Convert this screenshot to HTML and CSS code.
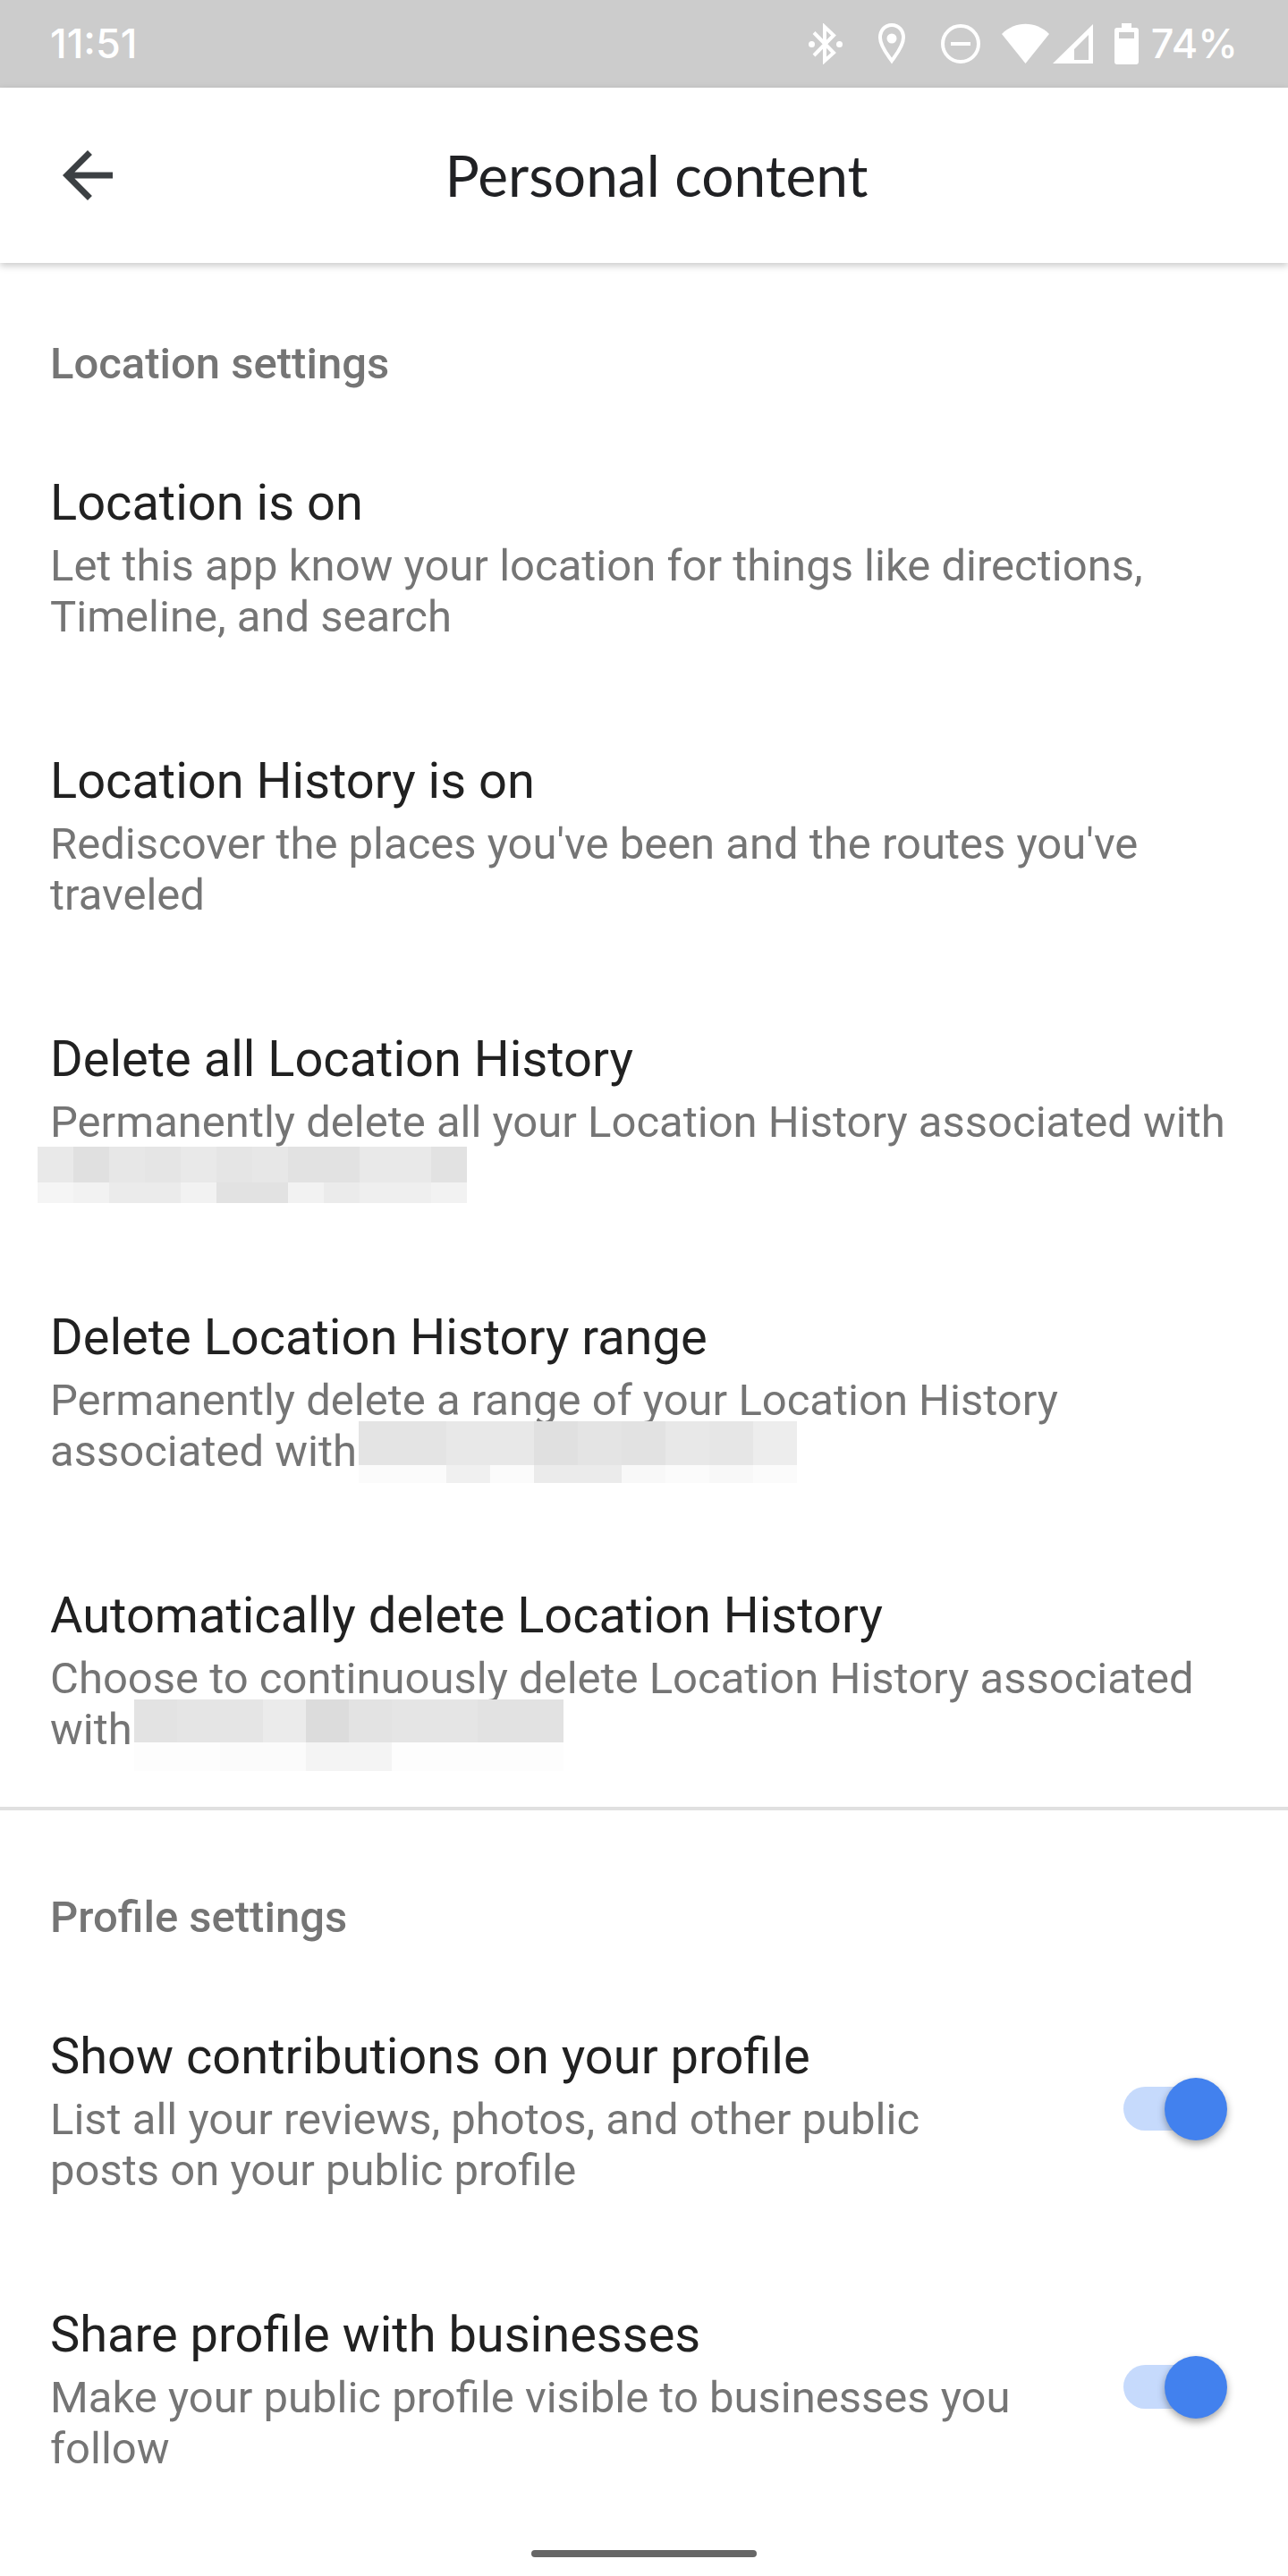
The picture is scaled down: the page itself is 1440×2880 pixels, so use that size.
FILE: index.html
```html
<!DOCTYPE html>
<html lang="en">
<head>
<meta charset="utf-8">
<meta name="viewport" content="width=device-width, initial-scale=1">
<title>Personal content</title>
<link rel="stylesheet" href="styles.css">
</head>
<body>
<div class="status-bar">
  <time class="clock">11:51</time>
  <div class="status-icons">
    <div class="notifications">
      <svg width="38" height="46" viewBox="0 0 38 46" role="img" aria-label="Bluetooth connected">
        <path d="M6 10.500L28 33L18 42V4L28 13.500L6 36" fill="none" stroke="#fff" stroke-width="4"/>
        <circle cx="3.500" cy="23.500" r="3.500" fill="#fff"/><circle cx="34.500" cy="23.500" r="3.500" fill="#fff"/>
      </svg>
      <svg width="30" height="46" viewBox="0 0 30 46" role="img" aria-label="Location">
        <path d="M15 2C7 2 2 8.500 2 16C2 26 11 36 15 42C19 36 28 26 28 16C28 8.500 23 2 15 2Z" fill="none" stroke="#fff" stroke-width="4"/>
        <circle cx="15" cy="17" r="5.500" fill="#fff"/>
      </svg>
      <svg width="44" height="46" viewBox="0 0 44 46" role="img" aria-label="Do not disturb">
        <circle cx="22" cy="23" r="20" fill="none" stroke="#fff" stroke-width="4"/>
        <path d="M11 23H33" stroke="#fff" stroke-width="4"/>
      </svg>
    </div>
    <div class="signals">
      <svg width="53" height="46" viewBox="0 0 53 46" role="img" aria-label="Wi-Fi">
        <path d="M0 12C15 -3 38 -3 53 12L26.500 45Z" fill="#fff"/>
      </svg>
      <svg width="45" height="46" viewBox="0 0 45 46" role="img" aria-label="Mobile signal">
        <path fill-rule="evenodd" d="M45 1V45H0ZM40 13L24 29V41H40Z" fill="#fff"/>
      </svg>
    </div>
    <div class="battery">
      <svg width="27" height="46" viewBox="0 0 27 46" role="img" aria-label="Battery">
        <path fill-rule="evenodd" d="M8 0H19V5H24Q27 5 27 8V43Q27 46 24 46H3Q0 46 0 43V8Q0 5 3 5H8ZM5 10V17H22V10Z" fill="#fff"/>
      </svg>
      <span>74%</span>
    </div>
  </div>
</div>

<header class="app-bar">
  <button class="back" type="button" aria-label="Back">
    <svg width="84" height="84" viewBox="0 0 24 24"><path d="M20 11H7.830l5.590-5.590L12 4l-8 8 8 8 1.410-1.410L7.830 13H20v-2z" fill="#3c4043"/></svg>
  </button>
  <h1>Personal content</h1>
</header>

<main>
  <section class="group">
    <h2>Location settings</h2>
    <div class="row">
      <h3>Location is on</h3>
      <p>Let this app know your location for things like directions, Timeline, and search</p>
    </div>
    <div class="row">
      <h3>Location History is on</h3>
      <p>Rediscover the places you've been and the routes you've traveled</p>
    </div>
    <div class="row">
      <h3>Delete all Location History</h3>
      <p>Permanently delete all your Location History associated with
        <svg class="mosaic mosaic-outdent" width="480" height="63" viewBox="0 0 480 63" shape-rendering="crispEdges" aria-hidden="true">
          <path fill="#e9e9e9" d="M0 0h40v40H0zM160 0h40v40h-40zM360 0h80v40h-80z"/>
          <path fill="#e0e0e0" d="M40 0h40v40H40z"/>
          <path fill="#e7e7e7" d="M80 0h40v40H80zM240 0h40v40h-40z"/>
          <path fill="#e5e5e5" d="M120 0h40v40h-40zM200 0h40v40h-40z"/>
          <path fill="#e2e2e2" d="M280 0h80v40h-80zM440 0h40v40h-40zM200 40h80v23h-80z"/>
          <path fill="#f5f5f5" d="M0 40h40v23H0z"/>
          <path fill="#f2f2f2" d="M40 40h40v23H40zM160 40h40v23h-40zM280 40h40v23h-40zM440 40h40v23h-40z"/>
          <path fill="#ebebeb" d="M80 40h80v23H80zM320 40h40v23h-40z"/>
          <path fill="#efefef" d="M360 40h80v23h-80z"/>
        </svg></p>
    </div>
    <div class="row">
      <h3>Delete Location History range</h3>
      <p>Permanently delete a range of your Location History associated with<svg class="mosaic" width="490" height="69" viewBox="0 0 490 69" shape-rendering="crispEdges" aria-hidden="true">
          <path fill="#e4e4e4" d="M0 0h98v49H0zM245 0h49v49h-49z"/>
          <path fill="#e8e8e8" d="M98 0h98v49H98zM343 0h49v49h-49z"/>
          <path fill="#e0e0e0" d="M196 0h49v49h-49z"/>
          <path fill="#e2e2e2" d="M294 0h49v49h-49z"/>
          <path fill="#e6e6e6" d="M392 0h49v49h-49z"/>
          <path fill="#ededed" d="M441 0h49v49h-49z"/>
          <path fill="#fbfbfb" d="M0 49h98v20H0zM147 49h49v20h-49zM343 49h49v20h-49zM441 49h49v20h-49z"/>
          <path fill="#f0f0f0" d="M98 49h49v20H98z"/>
          <path fill="#ebebeb" d="M196 49h98v20h-98z"/>
          <path fill="#f8f8f8" d="M294 49h49v20h-49zM392 49h49v20h-49z"/>
        </svg></p>
    </div>
    <div class="row">
      <h3>Automatically delete Location History</h3>
      <p>Choose to continuously delete Location History associated with<svg class="mosaic" width="480" height="80" viewBox="0 0 480 80" shape-rendering="crispEdges" aria-hidden="true">
          <path fill="#e3e3e3" d="M0 0h48v48H0zM240 0h48v48h-48z"/>
          <path fill="#e5e5e5" d="M48 0h96v48H48zM288 0h96v48h-96z"/>
          <path fill="#ebebeb" d="M144 0h48v48h-48z"/>
          <path fill="#dcdcdc" d="M192 0h48v48h-48z"/>
          <path fill="#e2e2e2" d="M384 0h96v48h-96z"/>
          <path fill="#fdfdfd" d="M0 48h96v32H0zM288 48h192v32H288z"/>
          <path fill="#fbfbfb" d="M96 48h96v32H96z"/>
          <path fill="#f4f4f4" d="M192 48h96v32h-96z"/>
        </svg></p>
    </div>
  </section>

  <section class="group">
    <h2>Profile settings</h2>
    <div class="row row-toggle">
      <label for="contributions">
        <span class="label-title">Show contributions on your profile</span>
        <span class="label-text">List all your reviews, photos, and other public posts on your public profile</span>
      </label>
      <input class="toggle" id="contributions" type="checkbox" role="switch" checked>
    </div>
    <div class="row row-toggle">
      <label for="businesses">
        <span class="label-title">Share profile with businesses</span>
        <span class="label-text">Make your public profile visible to businesses you follow</span>
      </label>
      <input class="toggle" id="businesses" type="checkbox" role="switch" checked>
    </div>
  </section>
</main>

<footer class="home-bar"><div class="home-handle"></div></footer>
</body>
</html>
```
FILE: styles.css
```css
* {
  box-sizing: border-box;
}

body {
  margin: 0;
  background: #fff;
  color: #202124;
  font-family: Roboto, "Liberation Sans", sans-serif;
}

h1, h2, h3, p {
  margin: 0;
}

svg {
  flex: none;
}

/* Status bar */
.status-bar {
  display: flex;
  align-items: center;
  justify-content: space-between;
  height: 98px;
  padding: 0 56px;
  background: #ccc;
  color: #fff;
  font: 500 45px/56px Inter, Roboto, sans-serif;
}

.status-icons,
.notifications,
.signals,
.battery {
  display: flex;
  align-items: center;
}

.status-icons {
  gap: 24px;
}

.notifications {
  gap: 40px;
}

.signals {
  gap: 4px;
}

.battery {
  gap: 14px;
}

/* App bar */
.app-bar {
  position: relative;
  display: grid;
  grid-template-columns: 196px 1fr 168px;
  align-items: center;
  height: 196px;
  background: #fff;
  box-shadow: 0 3px 8px rgba(0, 0, 0, 0.22);
}

.back {
  display: flex;
  width: 84px;
  height: 84px;
  margin-left: 56px;
  padding: 0;
  border: 0;
  background: none;
}

h1 {
  font: 400 64px/72px Lato, Roboto, sans-serif;
  text-align: center;
}

/* Settings groups */
.group {
  padding-top: 84px;
}

.group + .group {
  padding-top: 91px;
  border-top: 4px solid #e0e0e0;
}

h2 {
  padding: 0 56px;
  margin-bottom: 30px;
  color: #757575;
  font-size: 49px;
  font-weight: 500;
  line-height: 57px;
}

.row {
  padding: 64px 56px 58px;
}

h3,
.label-title {
  display: block;
  margin-bottom: 9px;
  color: #212121;
  font-size: 56px;
  font-weight: 400;
  line-height: 66px;
}

p,
.label-text {
  display: block;
  color: #757575;
  font-size: 49px;
  line-height: 57px;
}

.mosaic {
  margin: -5px 0 -40px 2px;
  vertical-align: top;
}

.mosaic-outdent {
  margin-top: -1px;
  margin-left: -14px;
}

.row-toggle {
  display: flex;
  align-items: center;
  gap: 112px;
  padding-right: 72px;
}

.row-toggle label {
  flex: 1;
}

.toggle {
  appearance: none;
  position: relative;
  flex: none;
  width: 112px;
  height: 49px;
  margin: 0 0 6px;
  border-radius: 25px;
  background: #c6dafc;
}

.toggle::before {
  content: "";
  position: absolute;
  top: -10px;
  left: -4px;
  width: 70px;
  height: 70px;
  border-radius: 50%;
  background: #fafafa;
  box-shadow: 0 4px 8px rgba(0, 0, 0, 0.35);
}

.toggle:checked::before {
  left: 46px;
  background: #4281ee;
}

/* Gesture navigation */
.home-bar {
  padding: 27px 0 21px;
}

.home-handle {
  width: 252px;
  height: 8px;
  margin: 0 auto;
  border-radius: 4px;
  background: #666;
}
```
